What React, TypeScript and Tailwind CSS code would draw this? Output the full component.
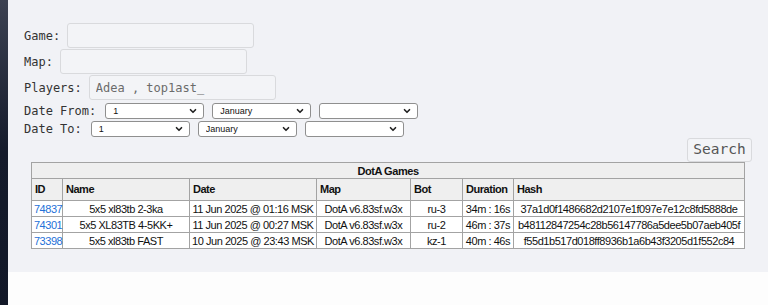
import { ChevronDown } from "lucide-react";

const mono = "font-['DejaVu_Sans_Mono','Liberation_Mono',monospace]";
const sans = "font-['Liberation_Sans',Arial,sans-serif]";

const games = [
  { id: "74837", name: "5x5 xl83tb 2-3ka", date: "11 Jun 2025 @ 01:16 MSK", map: "DotA v6.83sf.w3x", bot: "ru-3", duration: "34m : 16s", hash: "37a1d0f1486682d2107e1f097e7e12c8fd5888de" },
  { id: "74301", name: "5x5 XL83TB 4-5KK+", date: "11 Jun 2025 @ 00:27 MSK", map: "DotA v6.83sf.w3x", bot: "ru-2", duration: "46m : 37s", hash: "b48112847254c28b56147786a5dee5b07aeb405f" },
  { id: "73398", name: "5x5 xl83tb FAST", date: "10 Jun 2025 @ 23:43 MSK", map: "DotA v6.83sf.w3x", bot: "kz-1", duration: "40m : 46s", hash: "f55d1b517d018ff8936b1a6b43f3205d1f552c84" },
];

function TextField({ value = "" }: { value?: string }) {
  return (
    <input
      readOnly
      value={value}
      className={`${mono} block h-[25px] w-[187px] rounded-[3px] border border-[#d9dadd] bg-[#f3f4f7] px-[6px] text-[12px] text-[#6b6b6b] outline-none`}
    />
  );
}

function Dropdown({ value = "" }: { value?: string }) {
  return (
    <div className="relative h-[16px] w-[99px]">
      <select
        defaultValue={value}
        className={`${sans} block h-[16px] w-full appearance-none rounded-[3px] border border-[#8f8f8f] bg-white py-0 pl-[7px] text-[9px] leading-[14px] text-[#111]`}
      >
        <option value={value}>{value}</option>
      </select>
      <ChevronDown size={10} strokeWidth={4} className="pointer-events-none absolute right-[6px] top-[3px] text-[#222]" />
    </div>
  );
}

function DateRow({ label }: { label: string }) {
  return (
    <div className="flex h-[16px] items-center">
      <span className={`${mono} text-[12px] leading-[16px] text-[#333]`}>{label}</span>
      <div className="ml-[9px] flex gap-[8px]">
        <Dropdown value="1" />
        <Dropdown value="January" />
        <Dropdown />
      </div>
    </div>
  );
}

function FieldRow({ label, value }: { label: string; value?: string }) {
  return (
    <div className="flex items-center gap-[7px]">
      <span className={`${mono} text-[12px] text-[#333]`}>{label}</span>
      <TextField value={value} />
    </div>
  );
}

export default function App() {
  const th = "border border-[#a3a3a3] px-[3px] text-left font-bold";
  const td = "border border-[#a3a3a3] px-0 text-center h-[16px] leading-[14px] whitespace-nowrap";

  return (
    <div className="flex h-[305px] w-[768px] overflow-hidden bg-white">
      {/* dark page edge */}
      <div className="h-full w-[8px] bg-gradient-to-b from-[#3d4252] via-[#151b2b] to-[#121828]" />

      <div className="flex flex-1 flex-col">
        <div className="h-[272px] bg-[#f1f2f6] px-[16px] pt-[23px]">
          <div className="flex flex-col gap-[1px]">
            <FieldRow label="Game:" />
            <FieldRow label="Map:" />
            <FieldRow label="Players:" value="Adea , top1ast_" />
          </div>

          <div className="mt-[3px] flex flex-col gap-[2px]">
            <DateRow label="Date From:" />
            <DateRow label="Date To:" />
          </div>

          <div className="mt-[1px] flex justify-end">
            <button
              className={`${mono} h-[24px] w-[65px] rounded-[3px] border border-[#d9dadd] bg-[#f3f4f7] text-[14.5px] text-[#555]`}
            >
              Search
            </button>
          </div>

          <table className={`${sans} mx-auto w-[713px] table-fixed border-collapse border border-[#8e8e8e] text-[11px] tracking-[-0.45px] text-[#111]`}>
            <colgroup>
              <col className="w-[31px]" />
              <col className="w-[127px]" />
              <col className="w-[127px]" />
              <col className="w-[94px]" />
              <col className="w-[52px]" />
              <col className="w-[51px]" />
              <col className="w-[231px]" />
            </colgroup>
            <thead className="bg-[#efefef]">
              <tr>
                <th colSpan={7} className="h-[16px] border border-[#a3a3a3] text-center font-bold leading-[14px]">
                  DotA Games
                </th>
              </tr>
              <tr className="h-[22px]">
                <th className={th}>ID</th>
                <th className={th}>Name</th>
                <th className={th}>Date</th>
                <th className={th}>Map</th>
                <th className={th}>Bot</th>
                <th className={th}>Duration</th>
                <th className={th}>Hash</th>
              </tr>
            </thead>
            <tbody className="bg-white">
              {games.map((g) => (
                <tr key={g.id}>
                  <td className={`${td} pl-[2px] text-left`}>
                    <a href="#" className="text-[#2470d8]">{g.id}</a>
                  </td>
                  <td className={td}>{g.name}</td>
                  <td className={td}>{g.date}</td>
                  <td className={td}>{g.map}</td>
                  <td className={td}>{g.bot}</td>
                  <td className={td}>{g.duration}</td>
                  <td className={td}>{g.hash}</td>
                </tr>
              ))}
            </tbody>
          </table>
        </div>
        <div className="flex-1 bg-[#fdfdfd]" />
      </div>
    </div>
  );
}
